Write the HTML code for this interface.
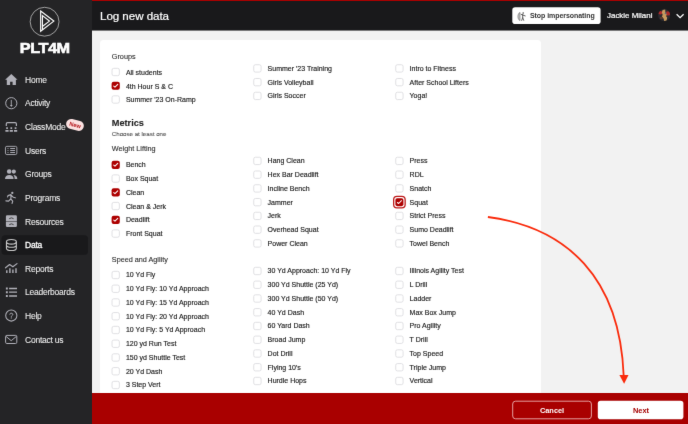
<!DOCTYPE html>
<html><head><meta charset="utf-8"><title>Log new data</title>
<style>
*{box-sizing:border-box;margin:0;padding:0}
html,body{width:688px;height:424px;overflow:hidden;background:#f2f2f2;}
body{will-change:transform;filter:url(#soft);font-family:"Liberation Sans",sans-serif;}
#side{position:absolute;left:0;top:0;width:92px;height:424px;background:#242426}
#hdr{position:absolute;left:92px;top:0;width:596px;height:31px;background:linear-gradient(to bottom,#19191b 28.7px,#7b7b7c 28.7px);border-top:1px solid #ab0000}
#title{position:absolute;left:8px;top:8.2px;font-size:11.6px;color:#fff;letter-spacing:-0.05px;-webkit-text-stroke:0.2px #fff}
#card{position:absolute;left:100px;top:40px;width:441px;height:360px;background:#fff;border-radius:3.5px 3.5px 0 0}
#foot{position:absolute;left:92px;top:393px;width:596px;height:31px;background:#a90000}
.row{position:absolute;height:13.8px;display:flex;align-items:center;white-space:nowrap}
.cb{display:block;width:8.2px;height:8.2px;border:0.8px solid #e0e0e4;border-radius:2px;background:#fff;flex:none}
.cb.on{background:#b00000;border-color:#b00000}
.cb.foc{box-shadow:0 0 0 1.2px #fff,0 0 0 2.3px #c02020}
.cb svg{display:block;width:8.2px;height:8.2px;margin:-0.8px}
.lb{font-size:7.0px;color:#1c1c1c;-webkit-text-stroke:0.15px #1c1c1c;position:relative;top:0px}
.h{position:absolute;left:111.8px;font-size:7.25px;color:#2a2a2a;white-space:nowrap;-webkit-text-stroke:0.1px #2a2a2a}
.nav{position:absolute;left:2px;width:87px;height:22px;border-radius:4px;display:flex;align-items:center;white-space:nowrap}
.nav.act{background:none}
#actbg{position:absolute;left:1.5px;top:235.2px;width:86.5px;height:19.6px;border-radius:4px;background:#19191b}
.ic{width:15px;height:15px;margin-left:1.7px;flex:none}
.nt{margin-left:6.4px;font-size:8.5px;color:#ececec;letter-spacing:-0.24px;-webkit-text-stroke:0.08px #ececec}
.nav.act .nt{color:#fff;-webkit-text-stroke:0.3px #fff}
.new{position:absolute;left:64px;top:4.3px;background:#fbe1e1;color:#b3141a;font-size:5.7px;font-weight:bold;padding:1.7px 3.4px 2px;border-radius:6px;transform:rotate(14deg);letter-spacing:0}
.btn{position:absolute;top:7.8px;height:18.3px;border-radius:3px;font-size:7.4px;font-weight:bold;text-align:center;line-height:17px}
</style></head><body>
<svg width="0" height="0" style="position:absolute"><defs><filter id="soft" x="0" y="0" width="100%" height="100%" color-interpolation-filters="sRGB"><feConvolveMatrix order="3" kernelMatrix="0.0049 0.0602 0.0049 0.0602 0.7396 0.0602 0.0049 0.0602 0.0049" edgeMode="duplicate" preserveAlpha="true"/></filter></defs></svg>
<div id="side">
<svg style="position:absolute;left:0;top:0" width="92" height="424" viewBox="0 0 92 424"><rect x="1.5" y="235.2" width="86.5" height="19.6" rx="3.5" fill="#19191b"/></svg>
<svg style="position:absolute;left:28px;top:2px" width="34" height="38" viewBox="0 0 379 424"><circle cx="185" cy="220" r="161" fill="none" stroke="#d0d0d0" stroke-width="8"/><path d="M141 101 L288 213 L141 327 Z" fill="none" stroke="#fff" stroke-width="13" stroke-linejoin="miter"/><path d="M161 312 V152 L239 213 L164 270" fill="none" stroke="#fff" stroke-width="13" stroke-linejoin="miter"/></svg>
<div style="position:absolute;left:0;width:89.5px;top:40px;text-align:center;font-size:14.8px;font-weight:bold;color:#fff;letter-spacing:-0.4px;-webkit-text-stroke:0.6px #fff;transform:scaleX(1.10)">PLT4M</div>
<div class="nav" style="top:69.0px"><span class="ic"></span><span class="nt">Home</span></div>
<div class="nav" style="top:92.0px"><span class="ic"></span><span class="nt">Activity</span></div>
<div class="nav" style="top:116.0px"><span class="ic"></span><span class="nt">ClassMode</span><span class="new">New</span></div>
<div class="nav" style="top:139.5px"><span class="ic"></span><span class="nt">Users</span></div>
<div class="nav" style="top:163.0px"><span class="ic"></span><span class="nt">Groups</span></div>
<div class="nav" style="top:187.0px"><span class="ic"></span><span class="nt">Programs</span></div>
<div class="nav" style="top:210.5px"><span class="ic"></span><span class="nt">Resources</span></div>
<div class="nav act" style="top:234.0px"><span class="ic"></span><span class="nt">Data</span></div>
<div class="nav" style="top:257.5px"><span class="ic"></span><span class="nt">Reports</span></div>
<div class="nav" style="top:281.0px"><span class="ic"></span><span class="nt">Leaderboards</span></div>
<div class="nav" style="top:305.0px"><span class="ic"></span><span class="nt">Help</span></div>
<div class="nav" style="top:328.5px"><span class="ic"></span><span class="nt">Contact us</span></div>
<svg style="position:absolute;left:0;top:0" width="92" height="424" viewBox="0 0 92 424">
<path d="M11.3 74.1 L17.5 79.8 H15.9 V84.9 H12.6 V81.8 H10.1 V84.9 H6.8 V79.8 H5.1 Z" fill="#b0b0b8"/>
<circle cx="11.3" cy="103.2" r="5.6" fill="none" stroke="#b0b0b8" stroke-width="1"/><path d="M11.3 99.9 V106" fill="none" stroke="#b0b0b8" stroke-width="0.9"/><path d="M9.9 104.9 H12.7 L11.3 106.9 Z" fill="#b0b0b8"/>
<path d="M6.3 126 V123.9 Q6.3 122.7 7.5 122.7 H15.2 Q16.4 122.7 16.4 123.9 V126" fill="none" stroke="#b0b0b8" stroke-width="1.2"/>
<path d="M6.2 127.2 h1.7 v1.7 h-1.7 Z M10.45 127.2 h1.7 v1.7 h-1.7 Z M14.7 127.2 h1.7 v1.7 h-1.7 Z M5.4 129.9 h3.2 v1.8 h-3.2 Z M9.7 129.9 h3.2 v1.8 h-3.2 Z M14.0 129.9 h3.2 v1.8 h-3.2 Z" fill="#b0b0b8"/>
<rect x="5.45" y="146.35" width="11.4" height="8.2" rx="1.4" fill="none" stroke="#b0b0b8" stroke-width="0.9"/>
<path d="M10.2 148.5 H15 M10.2 150.5 H15 M10.2 152.5 H15" stroke="#b0b0b8" stroke-width="0.95"/><path d="M7.2 148.5 H8.8 M7.2 150.5 H8.8 M7.2 152.5 H8.8" stroke="#77777d" stroke-width="0.9"/>
<circle cx="13.8" cy="171.6" r="2.1" fill="#b0b0b8"/><circle cx="9.2" cy="171.5" r="2.75" fill="#242426"/><circle cx="9.2" cy="171.5" r="2.3" fill="#b0b0b8"/>
<path d="M14.0 174.9 C16 175.2 17.3 176.4 17.3 178.9 H14.6 C14.6 177.2 14.3 175.9 13.4 175.0 Z" fill="#b0b0b8"/>
<path d="M5 178.9 C5 176.2 6.8 174.9 9.3 174.9 S13.6 176.2 13.6 178.9 Z" fill="#b0b0b8"/>
<circle cx="12.3" cy="192.9" r="1.15" fill="#b0b0b8"/>
<path d="M7.6 196.9 L8 195.6 L11 194.6 L10.9 199.2 M10.7 199 L8.6 201.1 L5.9 200.9 M11 199.2 L12.7 201.1 L12.1 203.4 M11.6 195.6 L13.2 197.2 L15.3 197.8" fill="none" stroke="#b0b0b8" stroke-width="1.15" stroke-linecap="round" stroke-linejoin="round"/>
<path d="M7.1 215.3 H15.7 Q16.9 215.3 16.9 216.5 V221 H5.9 V216.5 Q5.9 215.3 7.1 215.3 Z M5.9 221.6 H16.9 V225.8 Q16.9 227 15.7 227 H7.1 Q5.9 227 5.9 225.8 Z" fill="#b0b0b8"/>
<path d="M9.2 218.7 Q11.4 217 13.6 218.7 M9.2 224.7 Q11.4 223 13.6 224.7" fill="none" stroke="#242426" stroke-width="0.8"/>
<ellipse cx="11.4" cy="241.8" rx="4.95" ry="2.3" fill="none" stroke="#c6c6c6" stroke-width="1.1"/>
<path d="M6.45 241.8 V248.2 C6.45 249.5 8.7 250.5 11.4 250.5 S16.35 249.5 16.35 248.2 V241.8 M6.45 245 C6.45 246.3 8.7 247.3 11.4 247.3 S16.35 246.3 16.35 245" fill="none" stroke="#c6c6c6" stroke-width="1.1"/>
<path d="M5.5 267.8 L9.6 264.5 L12.9 266.8 L17 263.6" fill="none" stroke="#b0b0b8" stroke-width="1.15" stroke-linecap="round" stroke-linejoin="round"/>
<path d="M6.8 270.2 V273 M9.9 268.3 V273 M12.9 269.4 V273 M16 268.3 V273" stroke="#b0b0b8" stroke-width="1.4"/>
<path d="M5.9 287.6 h1.9 v1.9 h-1.9 Z M5.9 291.3 h1.9 v1.9 h-1.9 Z M5.9 295.0 h1.9 v1.9 h-1.9 Z" fill="#b0b0b8"/>
<path d="M9.1 288.5 H17 M9.1 292.2 H17 M9.1 296 H17" stroke="#b0b0b8" stroke-width="1.3"/>
<circle cx="11.3" cy="315.5" r="5.6" fill="none" stroke="#b0b0b8" stroke-width="1.05"/>
<path d="M9.8 314.6 C9.8 313.6 10.5 313.2 11.3 313.2 S12.8 313.7 12.8 314.5 C12.8 315.6 11.3 315.5 11.3 316.7" fill="none" stroke="#b0b0b8" stroke-width="1"/><circle cx="11.3" cy="317.9" r="0.6" fill="#b0b0b8"/>
<rect x="5.6" y="335.4" width="11.2" height="8.1" rx="1.2" fill="none" stroke="#b0b0b8" stroke-width="1"/>
<path d="M5.9 336.3 L11.2 340.7 L16.5 336.3" fill="none" stroke="#b0b0b8" stroke-width="1"/>
</svg>
</div>
<div id="hdr"><div id="title">Log new data</div>
<svg style="position:absolute;left:0;top:-1px" width="596" height="31" viewBox="92 0 596 31"><rect x="512.3" y="7.3" width="88.3" height="16.7" rx="2.8" fill="#fff"/></svg>
<div style="position:absolute;left:420.3px;top:6.1px;width:88.3px;height:16.6px;">
<svg style="position:absolute;left:4.4px;top:4.6px" width="9" height="9" viewBox="0 0 9 9"><path d="M3 0.4 C0.2 1.6 0.2 7.4 3 8.6 Z" fill="#c4c4c4" stroke="#6a6a6a" stroke-width="0.6"/><circle cx="6.2" cy="1" r="0.75" fill="#444"/><path d="M4.2 2.4 L5.6 3 L8.2 3.9 M5.7 2.2 V5.6 L4.7 8.4 M5.7 5.6 L6.7 8.3" fill="none" stroke="#444" stroke-width="0.85" stroke-linecap="round"/></svg>
<span style="position:absolute;left:17.6px;top:5.2px;font-size:7px;font-weight:bold;color:#333;white-space:nowrap;letter-spacing:-0.05px">Stop impersonating</span></div>
<span style="position:absolute;left:515px;top:9.6px;font-size:7.95px;color:#fff;white-space:nowrap;-webkit-text-stroke:0.2px #fff">Jackie Milani</span>
<svg style="position:absolute;left:566.2px;top:8.2px" width="12.4" height="12.4" viewBox="0 0 12.4 12.4"><defs><clipPath id="avc"><circle cx="6.2" cy="6.2" r="6.1"/></clipPath></defs><g clip-path="url(#avc)"><rect width="12.4" height="12.4" fill="#2b2a30"/><ellipse cx="2.2" cy="3.8" rx="2.2" ry="1.8" fill="#b02a2a"/><ellipse cx="10" cy="4.4" rx="2.3" ry="2.2" fill="#a82828"/><path d="M4.6 1 L7.2 0.6 L7.4 3.4 L8.6 5.2 L8.2 7.4 L9.2 8.6 L8.6 11.4 L6.2 12 L5.6 9.4 L4 8 L4.6 5.4 L3.8 3.4 Z" fill="#c89a5e"/><ellipse cx="3.4" cy="9" rx="1.6" ry="1.2" fill="#5a3a2c"/><ellipse cx="7.6" cy="4.4" rx="0.9" ry="0.8" fill="#5d6a7a"/></g></svg>
<svg style="position:absolute;left:583px;top:11.7px" width="10" height="7" viewBox="0 0 10 7"><path d="M1.6 1.3 L5.1 4.7 L8.6 1.3" fill="none" stroke="#fff" stroke-width="1.25"/></svg>
</div>
<div id="card"></div>
<div class="h" style="top:51.6px">Groups</div>
<div class="h" style="top:117.8px;font-size:9.2px;font-weight:bold;color:#222">Metrics</div>
<div class="h" style="top:130.4px;font-size:6.15px;color:#6b6b6b">Choose at least one</div>
<div class="h" style="top:144.4px">Weight Lifting</div>
<div class="h" style="top:254.5px">Speed and Agility</div>
<div class="row" style="left:125.90px;top:65.60px"><span class="lb">All students</span></div>
<div class="row" style="left:125.90px;top:79.35px"><span class="lb">4th Hour S &amp; C</span></div>
<div class="row" style="left:125.90px;top:93.10px"><span class="lb">Summer '23 On-Ramp</span></div>
<div class="row" style="left:267.60px;top:61.50px"><span class="lb">Summer '23 Training</span></div>
<div class="row" style="left:267.60px;top:75.25px"><span class="lb">Girls Volleyball</span></div>
<div class="row" style="left:267.60px;top:89.00px"><span class="lb">Girls Soccer</span></div>
<div class="row" style="left:409.60px;top:61.50px"><span class="lb">Intro to Fitness</span></div>
<div class="row" style="left:409.60px;top:75.25px"><span class="lb">After School Lifters</span></div>
<div class="row" style="left:409.60px;top:89.00px"><span class="lb">Yoga!</span></div>
<div class="row" style="left:125.90px;top:157.90px"><span class="lb">Bench</span></div>
<div class="row" style="left:125.90px;top:171.65px"><span class="lb">Box Squat</span></div>
<div class="row" style="left:125.90px;top:185.40px"><span class="lb">Clean</span></div>
<div class="row" style="left:125.90px;top:199.15px"><span class="lb">Clean &amp; Jerk</span></div>
<div class="row" style="left:125.90px;top:212.90px"><span class="lb">Deadlift</span></div>
<div class="row" style="left:125.90px;top:226.65px"><span class="lb">Front Squat</span></div>
<div class="row" style="left:267.60px;top:154.00px"><span class="lb">Hang Clean</span></div>
<div class="row" style="left:267.60px;top:167.75px"><span class="lb">Hex Bar Deadlift</span></div>
<div class="row" style="left:267.60px;top:181.50px"><span class="lb">Incline Bench</span></div>
<div class="row" style="left:267.60px;top:195.25px"><span class="lb">Jammer</span></div>
<div class="row" style="left:267.60px;top:209.00px"><span class="lb">Jerk</span></div>
<div class="row" style="left:267.60px;top:222.75px"><span class="lb">Overhead Squat</span></div>
<div class="row" style="left:267.60px;top:236.50px"><span class="lb">Power Clean</span></div>
<div class="row" style="left:409.60px;top:154.00px"><span class="lb">Press</span></div>
<div class="row" style="left:409.60px;top:167.75px"><span class="lb">RDL</span></div>
<div class="row" style="left:409.60px;top:181.50px"><span class="lb">Snatch</span></div>
<div class="row" style="left:409.60px;top:195.25px"><span class="lb">Squat</span></div>
<div class="row" style="left:409.60px;top:209.00px"><span class="lb">Strict Press</span></div>
<div class="row" style="left:409.60px;top:222.75px"><span class="lb">Sumo Deadlift</span></div>
<div class="row" style="left:409.60px;top:236.50px"><span class="lb">Towel Bench</span></div>
<div class="row" style="left:125.90px;top:268.10px"><span class="lb">10 Yd Fly</span></div>
<div class="row" style="left:125.90px;top:281.85px"><span class="lb">10 Yd Fly: 10 Yd Approach</span></div>
<div class="row" style="left:125.90px;top:295.60px"><span class="lb">10 Yd Fly: 15 Yd Approach</span></div>
<div class="row" style="left:125.90px;top:309.35px"><span class="lb">10 Yd Fly: 20 Yd Approach</span></div>
<div class="row" style="left:125.90px;top:323.10px"><span class="lb">10 Yd Fly: 5 Yd Approach</span></div>
<div class="row" style="left:125.90px;top:336.85px"><span class="lb">120 yd Run Test</span></div>
<div class="row" style="left:125.90px;top:350.60px"><span class="lb">150 yd Shuttle Test</span></div>
<div class="row" style="left:125.90px;top:364.35px"><span class="lb">20 Yd Dash</span></div>
<div class="row" style="left:125.90px;top:378.10px"><span class="lb">3 Step Vert</span></div>
<div class="row" style="left:267.60px;top:264.10px"><span class="lb">30 Yd Approach: 10 Yd Fly</span></div>
<div class="row" style="left:267.60px;top:277.85px"><span class="lb">300 Yd Shuttle (25 Yd)</span></div>
<div class="row" style="left:267.60px;top:291.60px"><span class="lb">300 Yd Shuttle (50 Yd)</span></div>
<div class="row" style="left:267.60px;top:305.35px"><span class="lb">40 Yd Dash</span></div>
<div class="row" style="left:267.60px;top:319.10px"><span class="lb">60 Yard Dash</span></div>
<div class="row" style="left:267.60px;top:332.85px"><span class="lb">Broad Jump</span></div>
<div class="row" style="left:267.60px;top:346.60px"><span class="lb">Dot Drill</span></div>
<div class="row" style="left:267.60px;top:360.35px"><span class="lb">Flying 10's</span></div>
<div class="row" style="left:267.60px;top:374.10px"><span class="lb">Hurdle Hops</span></div>
<div class="row" style="left:409.60px;top:264.10px"><span class="lb">Illinois Agility Test</span></div>
<div class="row" style="left:409.60px;top:277.85px"><span class="lb">L Drill</span></div>
<div class="row" style="left:409.60px;top:291.60px"><span class="lb">Ladder</span></div>
<div class="row" style="left:409.60px;top:305.35px"><span class="lb">Max Box Jump</span></div>
<div class="row" style="left:409.60px;top:319.10px"><span class="lb">Pro Agility</span></div>
<div class="row" style="left:409.60px;top:332.85px"><span class="lb">T Drill</span></div>
<div class="row" style="left:409.60px;top:346.60px"><span class="lb">Top Speed</span></div>
<div class="row" style="left:409.60px;top:360.35px"><span class="lb">Triple Jump</span></div>
<div class="row" style="left:409.60px;top:374.10px"><span class="lb">Vertical</span></div>
<svg style="position:absolute;left:0;top:0" width="688" height="424" viewBox="0 0 688 424"><rect x="112.02" y="68.32" width="7.36" height="7.36" rx="1.7" fill="#fff" stroke="#dadade" stroke-width="0.85"/><rect x="111.60" y="81.65" width="8.2" height="8.2" rx="2" fill="#ad0000"/><path d="M113.75 86.10 l1.2 1.0 l2.8 -2.8" fill="none" stroke="#fff" stroke-width="1.05" stroke-linecap="round" stroke-linejoin="round"/><rect x="112.02" y="95.82" width="7.36" height="7.36" rx="1.7" fill="#fff" stroke="#dadade" stroke-width="0.85"/><rect x="253.72" y="64.72" width="7.36" height="7.36" rx="1.7" fill="#fff" stroke="#dadade" stroke-width="0.85"/><rect x="253.72" y="78.47" width="7.36" height="7.36" rx="1.7" fill="#fff" stroke="#dadade" stroke-width="0.85"/><rect x="253.72" y="92.22" width="7.36" height="7.36" rx="1.7" fill="#fff" stroke="#dadade" stroke-width="0.85"/><rect x="395.72" y="64.72" width="7.36" height="7.36" rx="1.7" fill="#fff" stroke="#dadade" stroke-width="0.85"/><rect x="395.72" y="78.47" width="7.36" height="7.36" rx="1.7" fill="#fff" stroke="#dadade" stroke-width="0.85"/><rect x="395.72" y="92.22" width="7.36" height="7.36" rx="1.7" fill="#fff" stroke="#dadade" stroke-width="0.85"/><rect x="111.60" y="160.70" width="8.2" height="8.2" rx="2" fill="#ad0000"/><path d="M113.75 165.15 l1.2 1.0 l2.8 -2.8" fill="none" stroke="#fff" stroke-width="1.05" stroke-linecap="round" stroke-linejoin="round"/><rect x="112.02" y="174.87" width="7.36" height="7.36" rx="1.7" fill="#fff" stroke="#dadade" stroke-width="0.85"/><rect x="111.60" y="188.20" width="8.2" height="8.2" rx="2" fill="#ad0000"/><path d="M113.75 192.65 l1.2 1.0 l2.8 -2.8" fill="none" stroke="#fff" stroke-width="1.05" stroke-linecap="round" stroke-linejoin="round"/><rect x="112.02" y="202.37" width="7.36" height="7.36" rx="1.7" fill="#fff" stroke="#dadade" stroke-width="0.85"/><rect x="111.60" y="215.70" width="8.2" height="8.2" rx="2" fill="#ad0000"/><path d="M113.75 220.15 l1.2 1.0 l2.8 -2.8" fill="none" stroke="#fff" stroke-width="1.05" stroke-linecap="round" stroke-linejoin="round"/><rect x="112.02" y="229.87" width="7.36" height="7.36" rx="1.7" fill="#fff" stroke="#dadade" stroke-width="0.85"/><rect x="253.72" y="157.22" width="7.36" height="7.36" rx="1.7" fill="#fff" stroke="#dadade" stroke-width="0.85"/><rect x="253.72" y="170.97" width="7.36" height="7.36" rx="1.7" fill="#fff" stroke="#dadade" stroke-width="0.85"/><rect x="253.72" y="184.72" width="7.36" height="7.36" rx="1.7" fill="#fff" stroke="#dadade" stroke-width="0.85"/><rect x="253.72" y="198.47" width="7.36" height="7.36" rx="1.7" fill="#fff" stroke="#dadade" stroke-width="0.85"/><rect x="253.72" y="212.22" width="7.36" height="7.36" rx="1.7" fill="#fff" stroke="#dadade" stroke-width="0.85"/><rect x="253.72" y="225.97" width="7.36" height="7.36" rx="1.7" fill="#fff" stroke="#dadade" stroke-width="0.85"/><rect x="253.72" y="239.72" width="7.36" height="7.36" rx="1.7" fill="#fff" stroke="#dadade" stroke-width="0.85"/><rect x="395.72" y="157.22" width="7.36" height="7.36" rx="1.7" fill="#fff" stroke="#dadade" stroke-width="0.85"/><rect x="395.72" y="170.97" width="7.36" height="7.36" rx="1.7" fill="#fff" stroke="#dadade" stroke-width="0.85"/><rect x="395.72" y="184.72" width="7.36" height="7.36" rx="1.7" fill="#fff" stroke="#dadade" stroke-width="0.85"/><rect x="393.65" y="196.40" width="11.5" height="11.5" rx="3.3" fill="#fff" stroke="#bd1a1a" stroke-width="1.3"/><rect x="395.40" y="198.15" width="8" height="8" rx="1.8" fill="#ad0000"/><path d="M397.45 202.50 l1.2 1.0 l2.8 -2.8" fill="none" stroke="#fff" stroke-width="1.05" stroke-linecap="round" stroke-linejoin="round"/><rect x="395.72" y="212.22" width="7.36" height="7.36" rx="1.7" fill="#fff" stroke="#dadade" stroke-width="0.85"/><rect x="395.72" y="225.97" width="7.36" height="7.36" rx="1.7" fill="#fff" stroke="#dadade" stroke-width="0.85"/><rect x="395.72" y="239.72" width="7.36" height="7.36" rx="1.7" fill="#fff" stroke="#dadade" stroke-width="0.85"/><rect x="112.02" y="271.32" width="7.36" height="7.36" rx="1.7" fill="#fff" stroke="#dadade" stroke-width="0.85"/><rect x="112.02" y="285.07" width="7.36" height="7.36" rx="1.7" fill="#fff" stroke="#dadade" stroke-width="0.85"/><rect x="112.02" y="298.82" width="7.36" height="7.36" rx="1.7" fill="#fff" stroke="#dadade" stroke-width="0.85"/><rect x="112.02" y="312.57" width="7.36" height="7.36" rx="1.7" fill="#fff" stroke="#dadade" stroke-width="0.85"/><rect x="112.02" y="326.32" width="7.36" height="7.36" rx="1.7" fill="#fff" stroke="#dadade" stroke-width="0.85"/><rect x="112.02" y="340.07" width="7.36" height="7.36" rx="1.7" fill="#fff" stroke="#dadade" stroke-width="0.85"/><rect x="112.02" y="353.82" width="7.36" height="7.36" rx="1.7" fill="#fff" stroke="#dadade" stroke-width="0.85"/><rect x="112.02" y="367.57" width="7.36" height="7.36" rx="1.7" fill="#fff" stroke="#dadade" stroke-width="0.85"/><rect x="112.02" y="381.32" width="7.36" height="7.36" rx="1.7" fill="#fff" stroke="#dadade" stroke-width="0.85"/><rect x="253.72" y="267.32" width="7.36" height="7.36" rx="1.7" fill="#fff" stroke="#dadade" stroke-width="0.85"/><rect x="253.72" y="281.07" width="7.36" height="7.36" rx="1.7" fill="#fff" stroke="#dadade" stroke-width="0.85"/><rect x="253.72" y="294.82" width="7.36" height="7.36" rx="1.7" fill="#fff" stroke="#dadade" stroke-width="0.85"/><rect x="253.72" y="308.57" width="7.36" height="7.36" rx="1.7" fill="#fff" stroke="#dadade" stroke-width="0.85"/><rect x="253.72" y="322.32" width="7.36" height="7.36" rx="1.7" fill="#fff" stroke="#dadade" stroke-width="0.85"/><rect x="253.72" y="336.07" width="7.36" height="7.36" rx="1.7" fill="#fff" stroke="#dadade" stroke-width="0.85"/><rect x="253.72" y="349.82" width="7.36" height="7.36" rx="1.7" fill="#fff" stroke="#dadade" stroke-width="0.85"/><rect x="253.72" y="363.57" width="7.36" height="7.36" rx="1.7" fill="#fff" stroke="#dadade" stroke-width="0.85"/><rect x="253.72" y="377.32" width="7.36" height="7.36" rx="1.7" fill="#fff" stroke="#dadade" stroke-width="0.85"/><rect x="395.72" y="267.32" width="7.36" height="7.36" rx="1.7" fill="#fff" stroke="#dadade" stroke-width="0.85"/><rect x="395.72" y="281.07" width="7.36" height="7.36" rx="1.7" fill="#fff" stroke="#dadade" stroke-width="0.85"/><rect x="395.72" y="294.82" width="7.36" height="7.36" rx="1.7" fill="#fff" stroke="#dadade" stroke-width="0.85"/><rect x="395.72" y="308.57" width="7.36" height="7.36" rx="1.7" fill="#fff" stroke="#dadade" stroke-width="0.85"/><rect x="395.72" y="322.32" width="7.36" height="7.36" rx="1.7" fill="#fff" stroke="#dadade" stroke-width="0.85"/><rect x="395.72" y="336.07" width="7.36" height="7.36" rx="1.7" fill="#fff" stroke="#dadade" stroke-width="0.85"/><rect x="395.72" y="349.82" width="7.36" height="7.36" rx="1.7" fill="#fff" stroke="#dadade" stroke-width="0.85"/><rect x="395.72" y="363.57" width="7.36" height="7.36" rx="1.7" fill="#fff" stroke="#dadade" stroke-width="0.85"/><rect x="395.72" y="377.32" width="7.36" height="7.36" rx="1.7" fill="#fff" stroke="#dadade" stroke-width="0.85"/></svg>
<svg style="position:absolute;left:0;top:0;pointer-events:none" width="688" height="424" viewBox="0 0 688 424"><path d="M487.9 217 C567.1 227.6 619.9 278 623.7 376" fill="none" stroke="#fa2b0c" stroke-width="1.8"/><path d="M619.4 375 H628.5 L624.1 383.7 Z" fill="#fa2b0c"/></svg>
<div id="foot">
<svg style="position:absolute;left:0;top:0" width="596" height="31" viewBox="92 393 596 31"><rect x="512.7" y="401.2" width="78.7" height="17.6" rx="2.8" fill="none" stroke="#eab0b0" stroke-width="0.9"/><rect x="597.8" y="400.8" width="85.6" height="18.4" rx="2.8" fill="#fff"/></svg>
<div class="btn" style="left:420.3px;width:79.5px;color:#fff;line-height:19.5px">Cancel</div>
<div class="btn" style="left:505.8px;width:86.4px;color:#a50000;line-height:19.5px">Next</div>
</div>
</body></html>
